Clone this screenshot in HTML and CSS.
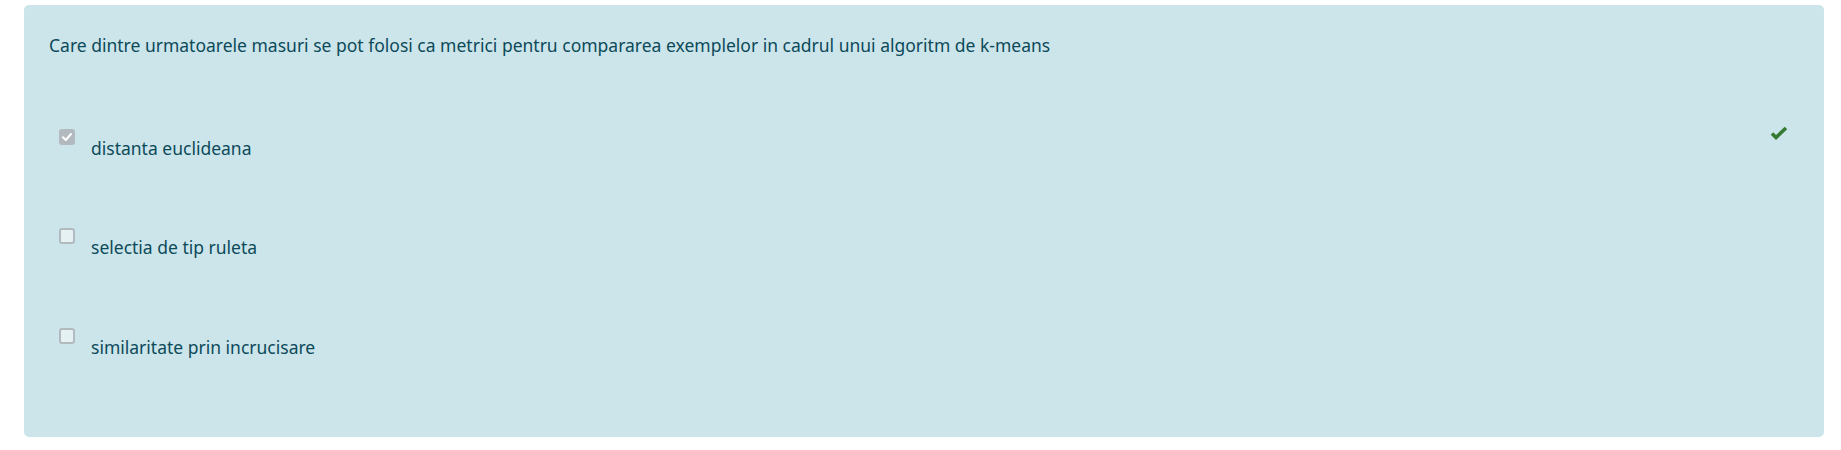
FILE: index.html
```html
<!DOCTYPE html>
<html lang="ro">
<head>
<meta charset="utf-8">
<title>Quiz</title>
<link rel="stylesheet" href="styles.css">
</head>
<body>
<div class="page">
  <div class="formulation">
    <div class="qtext">Care dintre urmatoarele masuri se pot folosi ca metrici pentru compararea exemplelor in cadrul unui algoritm de k-means</div>
    <div class="answers">
      <div class="option">
        <span class="box checked"><svg viewBox="0 0 16 16" width="16" height="16"><polyline points="4,8.3 6.8,11 12,5" fill="none" stroke="#fff" stroke-width="2" stroke-linecap="round" stroke-linejoin="round"/></svg></span>
        <span class="label">distanta euclideana</span>
        <span class="mark"><svg viewBox="0 0 18 14" width="18" height="14"><polyline points="2,7.5 6,11.5 16,2" fill="none" stroke="#357a32" stroke-width="3.6" stroke-linecap="butt" stroke-linejoin="miter"/></svg></span>
      </div>
      <div class="option">
        <span class="box"></span>
        <span class="label">selectia de tip ruleta</span>
      </div>
      <div class="option">
        <span class="box"></span>
        <span class="label">similaritate prin incrucisare</span>
      </div>
    </div>
  </div>
</div>
</body>
</html>
```
FILE: styles.css
```css
html, body {
  margin: 0;
  padding: 0;
  background: #ffffff;
}
.page {
  padding: 5px 17px 0 24px;
}
.formulation {
  background: #cce5ea;
  border-radius: 5px;
  height: 432px;
  box-sizing: border-box;
  padding: 28px 36px 0 25px;
  color: #0c4a5a;
  font-family: "Noto Sans", "Open Sans", sans-serif;
  font-size: 17.5px;
}
.qtext {
  line-height: 24px;
}
.answers {
  padding-top: 72px;
  padding-left: 10px;
}
.option {
  display: flex;
  align-items: flex-start;
  height: 99.3px;
}
.box {
  width: 16px;
  height: 16px;
  box-sizing: border-box;
  border: 2px solid #b2bac0;
  background: #e6f1f3;
  border-radius: 3px;
  flex: none;
  display: flex;
  align-items: center;
  justify-content: center;
}
.box.checked {
  background: #b2bac0;
  border-color: #b2bac0;
}
.box.checked svg {
  flex: none;
}
.label {
  margin-left: 16px;
  margin-top: 7px;
  line-height: 24px;
  flex: 1;
}
.mark {
  flex: none;
  margin-top: -3px;
  display: flex;
}
```
